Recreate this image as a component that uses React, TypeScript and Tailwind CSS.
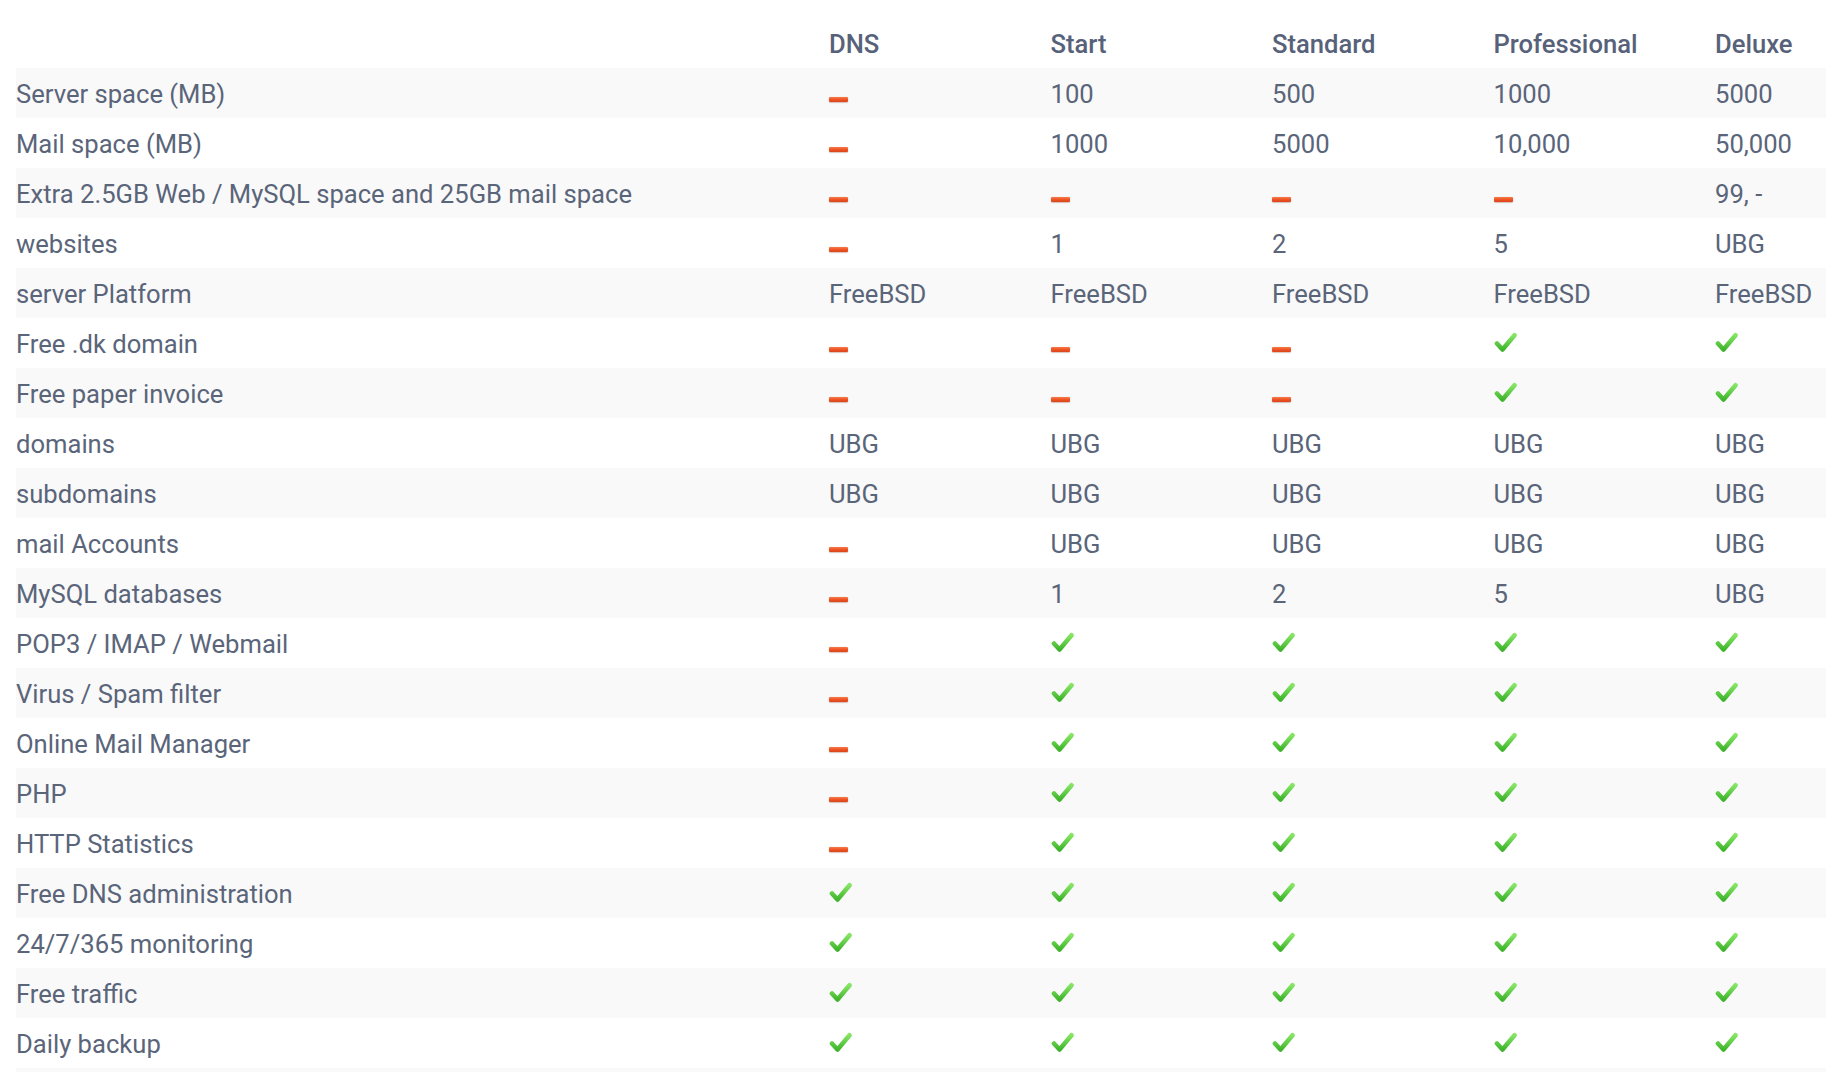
import React from "react";

type Cell = string | "-" | "v";

const rows: [string, Cell[]][] = [
  ["Server space (MB)", ["-", "100", "500", "1000", "5000"]],
  ["Mail space (MB)", ["-", "1000", "5000", "10,000", "50,000"]],
  ["Extra 2.5GB Web / MySQL space and 25GB mail space", ["-", "-", "-", "-", "99, -"]],
  ["websites", ["-", "1", "2", "5", "UBG"]],
  ["server Platform", ["FreeBSD", "FreeBSD", "FreeBSD", "FreeBSD", "FreeBSD"]],
  ["Free .dk domain", ["-", "-", "-", "v", "v"]],
  ["Free paper invoice", ["-", "-", "-", "v", "v"]],
  ["domains", ["UBG", "UBG", "UBG", "UBG", "UBG"]],
  ["subdomains", ["UBG", "UBG", "UBG", "UBG", "UBG"]],
  ["mail Accounts", ["-", "UBG", "UBG", "UBG", "UBG"]],
  ["MySQL databases", ["-", "1", "2", "5", "UBG"]],
  ["POP3 / IMAP / Webmail", ["-", "v", "v", "v", "v"]],
  ["Virus / Spam filter", ["-", "v", "v", "v", "v"]],
  ["Online Mail Manager", ["-", "v", "v", "v", "v"]],
  ["PHP", ["-", "v", "v", "v", "v"]],
  ["HTTP Statistics", ["-", "v", "v", "v", "v"]],
  ["Free DNS administration", ["v", "v", "v", "v", "v"]],
  ["24/7/365 monitoring", ["v", "v", "v", "v", "v"]],
  ["Free traffic", ["v", "v", "v", "v", "v"]],
  ["Daily backup", ["v", "v", "v", "v", "v"]],
  ["", ["", "", "", "", ""]],
];

const plans = ["DNS", "Start", "Standard", "Professional", "Deluxe"];

function Dash() {
  return (
    <span className="mt-[10px] inline-block h-[5px] w-[19px] rounded-[1px] bg-gradient-to-b from-[#f77a4a] via-[#ee5424] to-[#d9451c] shadow-[0_0.5px_1px_rgba(120,40,10,0.5)]" />
  );
}

function Check() {
  return (
    <svg width="24" height="21" viewBox="0 0 24 21" className="-mt-[4px]">
      <defs>
        <linearGradient id="cg" x1="0" y1="0" x2="0" y2="1">
          <stop offset="0" stopColor="#86e565" />
          <stop offset="1" stopColor="#3fb52c" />
        </linearGradient>
      </defs>
      <path
        d="M3 11.5 L8.5 17.5 L20.5 3.2"
        fill="none"
        stroke="url(#cg)"
        strokeWidth="4.6"
        strokeLinecap="round"
        strokeLinejoin="round"
      />
    </svg>
  );
}

function Value({ v }: { v: Cell }) {
  if (v === "-") return <Dash />;
  if (v === "v") return <Check />;
  return <span>{v}</span>;
}

export default function App() {
  return (
    <div
      className="h-[1072px] w-full overflow-hidden bg-white text-[#5a657a]"
      style={{ fontFamily: "Roboto, 'Liberation Sans', sans-serif" }}
    >
      <div className="pl-[16px] pt-[18px]">
        <div className="flex h-[50px] items-center pt-[2px] text-[25.6px] font-medium text-[#57627a]">
          <div className="w-[813px] shrink-0" />
          {plans.map((p) => (
            <div key={p} className="w-[221.5px] shrink-0 whitespace-nowrap">
              {p}
            </div>
          ))}
        </div>
        {rows.map(([label, vals], i) => (
          <div
            key={i}
            className={`flex h-[50px] w-[2000px] items-center pt-[2px] text-[25.6px] ${
              i % 2 === 0 ? "bg-[#f9f9f9]" : "bg-white"
            }`}
          >
            <div className="w-[813px] shrink-0 whitespace-nowrap">{label}</div>
            {vals.map((v, j) => (
              <div key={j} className="flex w-[221.5px] shrink-0 items-center whitespace-nowrap">
                <Value v={v} />
              </div>
            ))}
          </div>
        ))}
      </div>
    </div>
  );
}
